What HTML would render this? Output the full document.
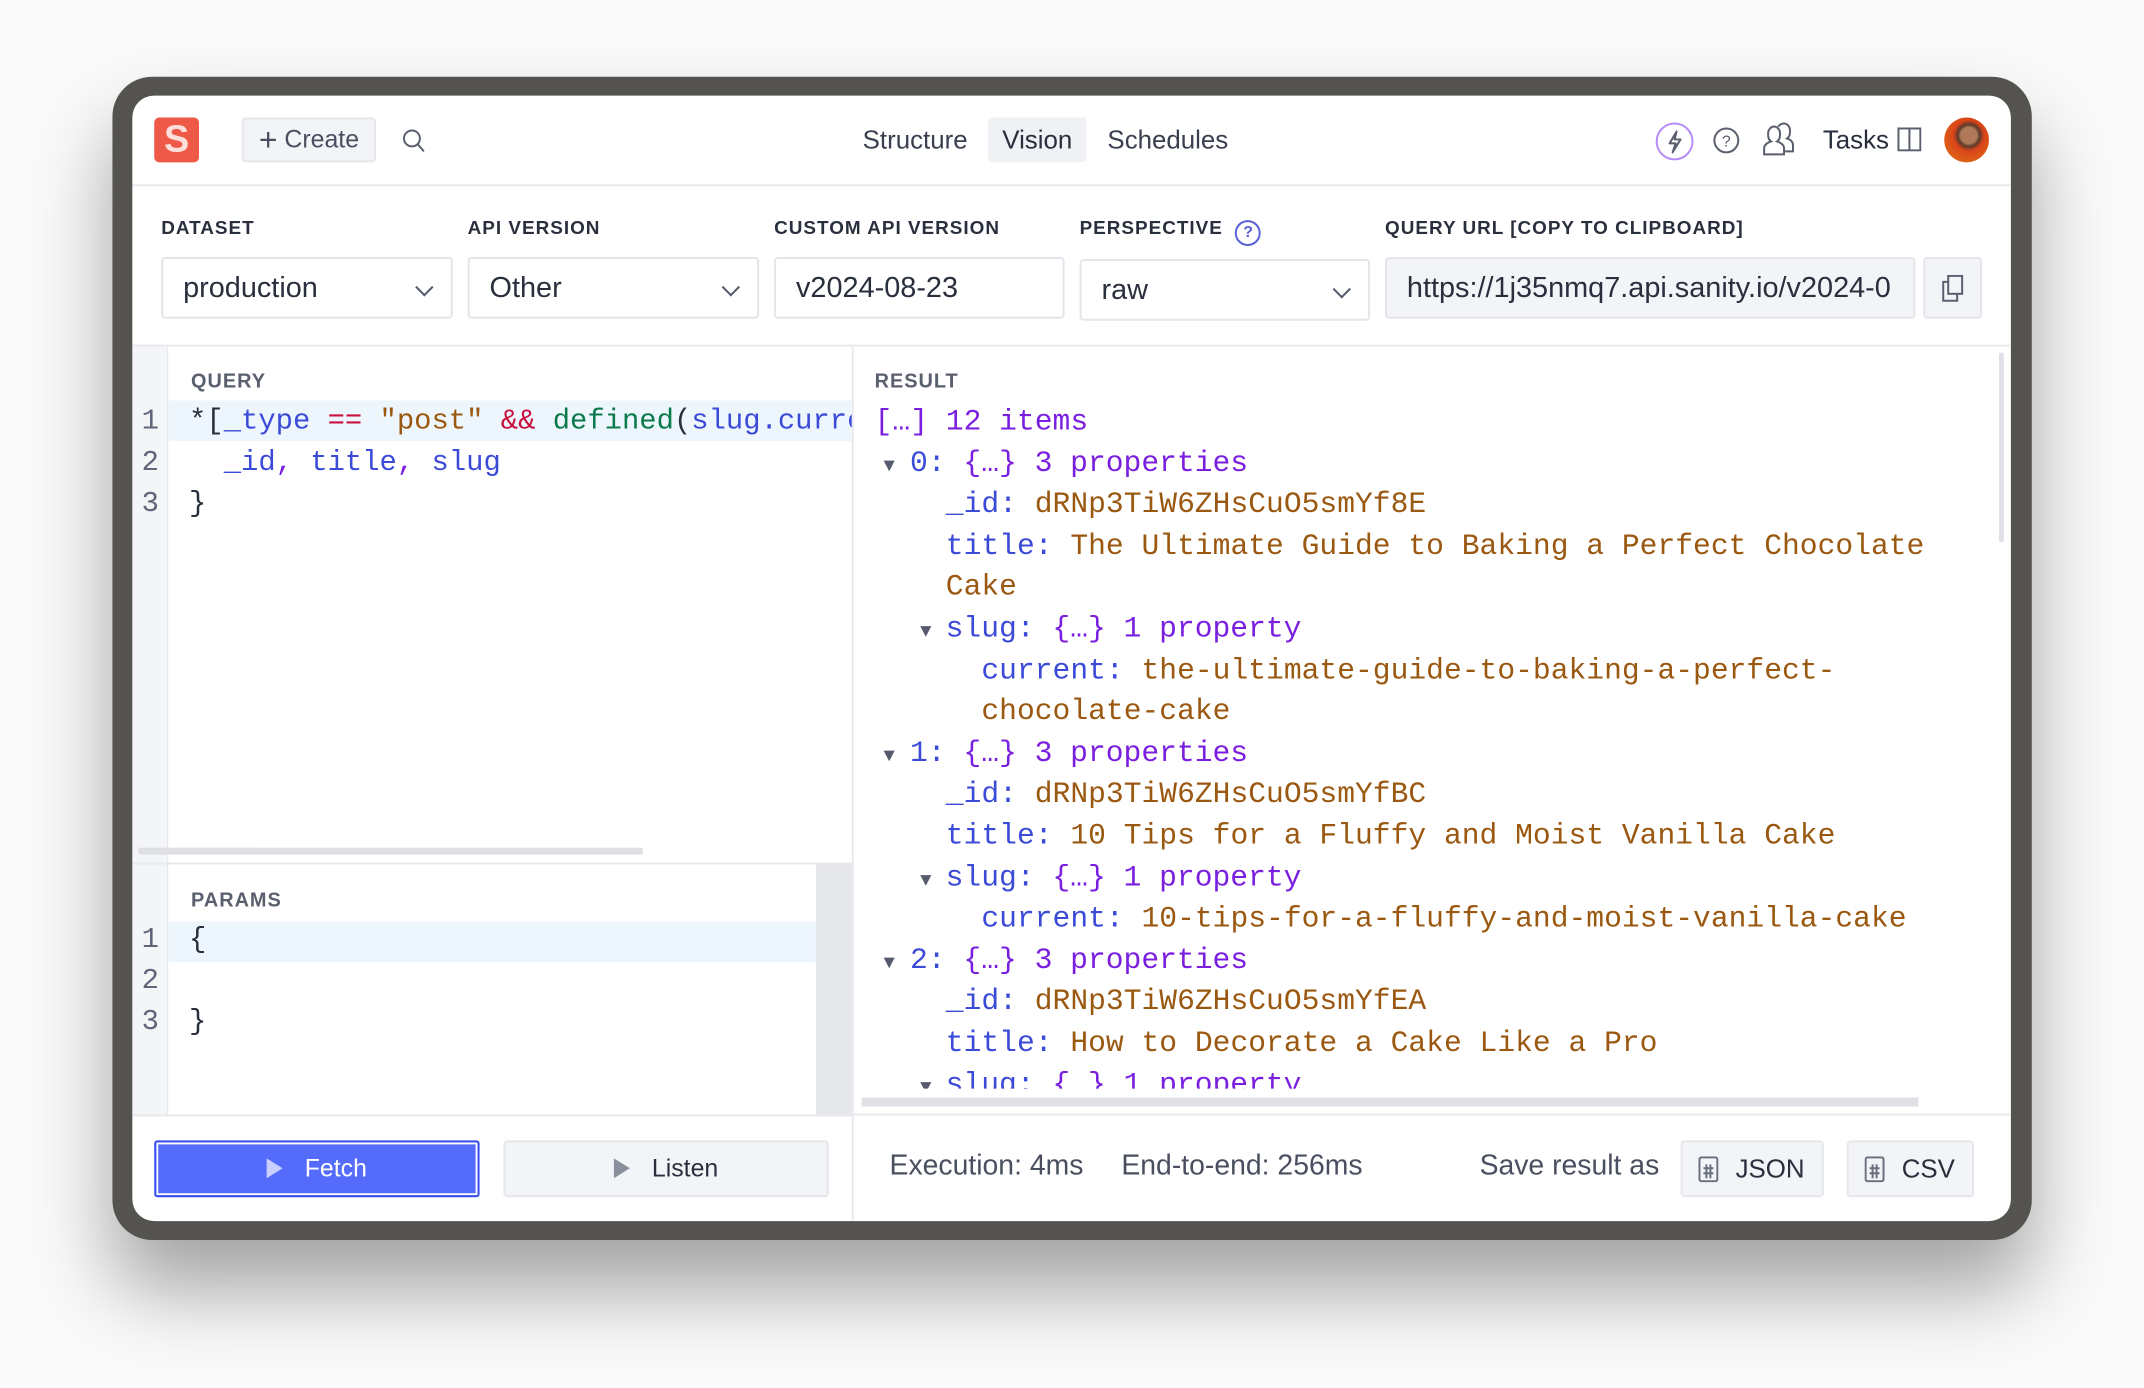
<!DOCTYPE html>
<html><head><meta charset="utf-8"><style>
*{box-sizing:border-box;margin:0;padding:0}
body{width:2144px;height:1388px;background:#fafafa;position:relative;overflow:hidden;font-family:"Liberation Sans",sans-serif;color:#2a2f3d}
#wrap{position:absolute;left:0;top:0;width:2144px;height:1388px;transform:scale(0.995,0.996);transform-origin:0 0}
.frame{position:absolute;left:113px;top:77px;width:1929px;height:1168px;background:#55534f;border-radius:40px;box-shadow:0 50px 80px rgba(0,0,0,.35)}
.win{position:absolute;left:133px;top:96px;width:1888px;height:1130px;background:#fff;border-radius:22px;overflow:hidden}
.a{position:absolute}
.lbl{position:absolute;font-size:19px;font-weight:bold;letter-spacing:1px;color:#2a2f3d}
.inp{position:absolute;height:62px;border:2px solid #e4e5ea;border-radius:4px;font-size:29px;padding-left:20px;line-height:58px;background:#fff}
.chev{position:absolute;right:20px;top:22px;width:13px;height:13px;border-right:2px solid #555b6c;border-bottom:2px solid #555b6c;transform:rotate(45deg)}
.mono{font-family:"Liberation Mono",monospace;font-size:29px;white-space:pre;position:absolute;line-height:41.6px}
.k{color:#3b4bd8}.p{color:#7a1fe0}.v{color:#9a5810}.t{color:#5a5f6e;font-size:20px}
.tr{display:inline-block;width:35.6px;line-height:0;font-size:19px;color:#555b6c;text-align:left;vertical-align:baseline}
.ln{position:absolute;left:0;width:36px;text-align:center;font-family:"Liberation Mono",monospace;font-size:29px;color:#60657a}
.btn{position:absolute;border:2px solid #e6e7ec;background:#f3f4f7;border-radius:4px;font-size:25px;color:#2a2f3d;text-align:center}
.nav{position:absolute;font-size:26px;color:#3a3f4f}
</style></head><body><div id="wrap">
<div class="frame"></div>
<div class="win">
 <div class="a" style="left:22px;top:22px;width:45px;height:45px;background:#ef5947;border-radius:5px;color:#fde0da;font-size:38px;font-weight:bold;text-align:center;line-height:45px">S</div>
 <div class="btn" style="left:110px;top:22px;width:135px;height:45px;line-height:41px;font-size:25px;color:#4a4f60"><span style="font-size:32px;vertical-align:-3px">+</span> Create</div>
 <svg class="a" style="left:270px;top:32px" width="28" height="28" viewBox="0 0 28 28" fill="none" stroke="#5a5f6e" stroke-width="2"><circle cx="11" cy="11" r="8"/><path d="M17 17l6 7"/></svg>
 <div class="nav" style="left:734px;top:29px">Structure</div>
 <div class="a" style="left:860px;top:22px;width:99px;height:45px;background:#f0f1f4;border-radius:4px;font-size:26px;line-height:45px;text-align:center">Vision</div>
 <div class="nav" style="left:980px;top:29px">Schedules</div>
 <svg class="a" style="left:1530px;top:26px" width="40" height="40" viewBox="0 0 40 40" fill="none"><circle cx="20" cy="20" r="18" stroke="#b58cf8" stroke-width="2"/><path d="M22 10l-7 12h6l-3 9 8-13h-6z" stroke="#5a5f6e" stroke-width="2" stroke-linejoin="round"/></svg>
 <svg class="a" style="left:1587px;top:30px" width="30" height="30" viewBox="0 0 30 30" fill="none" stroke="#5a5f6e" stroke-width="2"><circle cx="15" cy="15" r="12"/><text x="15" y="21" font-size="16" text-anchor="middle" fill="#5a5f6e" stroke="none" font-family="Liberation Sans">?</text></svg>
 <svg class="a" style="left:1637px;top:26px" width="34" height="36" viewBox="0 0 34 36" fill="none" stroke="#5a5f6e" stroke-width="2"><path d="M3 33v-6c0-4 4-6 7-7-3-2-3-5-3-8 0-4 3-7 6-7s6 3 6 7c0 3 0 6-3 8 3 1 7 3 7 7v6z"/><path d="M17 5c2-2 4-3 6-3 3 0 6 3 6 7 0 3 0 6-3 8 3 1 6 3 6 7v6h-8"/></svg>
 <div class="a" style="left:1699px;top:29px;font-size:26px;color:#2a2f3d">Tasks</div>
 <svg class="a" style="left:1774px;top:32px" width="24" height="24" viewBox="0 0 24 24" fill="none" stroke="#5a5f6e" stroke-width="2"><rect x="1" y="1" width="22" height="22"/><path d="M12 1v22"/></svg>
 <div class="a" style="left:1821px;top:22px;width:45px;height:45px;border-radius:50%;background:radial-gradient(circle at 55% 40%,#b07a5a 0 22%,#5a3a2a 30%,#d9441a 42%,#e07a10 100%)"></div>
 <div class="a" style="left:0;top:89px;width:1888px;height:2px;background:#e8e9ed"></div>
 <div class="lbl" style="left:29px;top:123px">DATASET</div>
 <div class="lbl" style="left:337px;top:123px">API VERSION</div>
 <div class="lbl" style="left:645px;top:123px">CUSTOM API VERSION</div>
 <div class="lbl" style="left:952px;top:123px">PERSPECTIVE <span style="display:inline-block;width:26px;height:26px;border:2px solid #5a5fd6;border-radius:50%;color:#5a5fd6;font-size:16px;text-align:center;line-height:22px;margin-left:6px;vertical-align:-3px;letter-spacing:0">?</span></div>
 <div class="lbl" style="left:1259px;top:123px">QUERY URL [COPY TO CLIPBOARD]</div>
 <div class="inp" style="left:29px;top:162px;width:293px">production<div class="chev"></div></div>
 <div class="inp" style="left:337px;top:162px;width:293px">Other<div class="chev"></div></div>
 <div class="inp" style="left:645px;top:162px;width:292px">v2024-08-23</div>
 <div class="inp" style="left:952px;top:164px;width:292px">raw<div class="chev"></div></div>
 <div class="inp" style="left:1259px;top:162px;width:533px;background:#f3f4f7;overflow:hidden;white-space:nowrap">https://1j35nmq7.api.sanity.io/v2024-0</div>
 <div class="inp" style="left:1800px;top:162px;width:59px;background:#f3f4f7;padding:0"><svg style="position:absolute;left:16px;top:16px" width="24" height="28" viewBox="0 0 24 28" fill="none" stroke="#5a5f6e" stroke-width="2"><rect x="7" y="1" width="14" height="18"/><path d="M7 7H2v19h14v-7"/></svg></div>
 <div class="a" style="left:0;top:250px;width:1888px;height:2px;background:#e8e9ed"></div>
 <div class="a" style="left:0;top:252px;width:36px;height:519px;background:#f4f5f7;border-right:1px solid #e4e5ea"></div>
 <div class="a" style="left:723px;top:252px;width:2px;height:878px;background:#e8e9ed"></div>
 <div class="t a" style="left:59px;top:276px;font-weight:bold;letter-spacing:1px">QUERY</div>
 <div class="a" style="left:36px;top:306px;width:687px;height:41px;background:#eef6fd"></div>
 <div class="ln" style="top:306px;line-height:41.6px">1<br>2<br>3</div>
 <div class="mono" style="left:57px;top:306px;width:666px;overflow:hidden">*[<span class="k">_type</span> <span style="color:#c8103e">==</span> <span class="v">"post"</span> <span style="color:#c8103e">&amp;&amp;</span> <span style="color:#0a7a4a">defined</span>(<span class="k">slug.current</span>)]{
  <span class="k">_id</span><span class="p">,</span> <span class="k">title</span><span class="p">,</span> <span class="k">slug</span>
}</div>
 <div class="a" style="left:6px;top:755px;width:507px;height:7px;background:#dfe0e5;border-radius:2px"></div>
 <div class="a" style="left:0;top:770px;width:723px;height:2px;background:#e8e9ed"></div>
 <div class="a" style="left:0;top:772px;width:36px;height:252px;background:#f4f5f7;border-right:1px solid #e4e5ea"></div>
 <div class="a" style="left:687px;top:772px;width:36px;height:252px;background:#e6e7eb"></div>
 <div class="t a" style="left:59px;top:797px;font-weight:bold;letter-spacing:1px">PARAMS</div>
 <div class="a" style="left:36px;top:829px;width:651px;height:41px;background:#eef6fd"></div>
 <div class="ln" style="top:827px;line-height:41px">1<br>2<br>3</div>
 <div class="mono" style="left:57px;top:827px;line-height:41px">{

}</div>
 <div class="a" style="left:0;top:1023px;width:723px;height:2px;background:#e8e9ed"></div>
 <div class="a" style="left:22px;top:1049px;width:327px;height:57px;background:#556bfc;border:2px solid #3a4ef0;box-shadow:inset 0 0 0 2px #fff;border-radius:3px;color:#fff;font-size:25px;text-align:center;line-height:53px"><span style="display:inline-block;width:0;height:0;border-left:16px solid #c9d0ff;border-top:10px solid transparent;border-bottom:10px solid transparent;margin-right:22px;vertical-align:-2px"></span>Fetch</div>
 <div class="btn" style="left:373px;top:1049px;width:327px;height:57px;line-height:53px"><span style="display:inline-block;width:0;height:0;border-left:16px solid #8a8f9e;border-top:10px solid transparent;border-bottom:10px solid transparent;margin-right:22px;vertical-align:-2px"></span>Listen</div>
 <div class="t a" style="left:746px;top:276px;font-weight:bold;letter-spacing:1px">RESULT</div>
 <div class="a" style="left:733px;top:307px;width:1140px;height:690px;overflow:hidden"><div class="mono" style="left:13px;top:0;font-size:29.8px"><span class="p">[…] 12 items</span>
<span class="tr" style="padding-left:9px">▼</span><span class="k">0:</span> <span class="p">{…} 3 properties</span>
    <span class="k">_id:</span> <span class="v">dRNp3TiW6ZHsCuO5smYf8E</span>
    <span class="k">title:</span> <span class="v">The Ultimate Guide to Baking a Perfect Chocolate</span>
    <span class="v">Cake</span>
  <span class="tr" style="padding-left:10px">▼</span><span class="k">slug:</span> <span class="p">{…} 1 property</span>
      <span class="k">current:</span> <span class="v">the-ultimate-guide-to-baking-a-perfect-</span>
      <span class="v">chocolate-cake</span>
<span class="tr" style="padding-left:9px">▼</span><span class="k">1:</span> <span class="p">{…} 3 properties</span>
    <span class="k">_id:</span> <span class="v">dRNp3TiW6ZHsCuO5smYfBC</span>
    <span class="k">title:</span> <span class="v">10 Tips for a Fluffy and Moist Vanilla Cake</span>
  <span class="tr" style="padding-left:10px">▼</span><span class="k">slug:</span> <span class="p">{…} 1 property</span>
      <span class="k">current:</span> <span class="v">10-tips-for-a-fluffy-and-moist-vanilla-cake</span>
<span class="tr" style="padding-left:9px">▼</span><span class="k">2:</span> <span class="p">{…} 3 properties</span>
    <span class="k">_id:</span> <span class="v">dRNp3TiW6ZHsCuO5smYfEA</span>
    <span class="k">title:</span> <span class="v">How to Decorate a Cake Like a Pro</span>
  <span class="tr" style="padding-left:10px">▼</span><span class="k">slug:</span> <span class="p">{…} 1 property</span></div></div>
 <div class="a" style="left:733px;top:1006px;width:1062px;height:9px;background:#e0e1e6"></div>
 <div class="a" style="left:1876px;top:258px;width:5px;height:190px;background:#e0e1e6;border-radius:2px"></div>
 <div class="a" style="left:725px;top:1022px;width:1163px;height:2px;background:#e8e9ed"></div>
 <div class="a" style="left:761px;top:1058px;font-size:28.5px;color:#4a4f60">Execution: 4ms</div>
 <div class="a" style="left:994px;top:1058px;font-size:28.5px;color:#4a4f60">End-to-end: 256ms</div>
 <div class="a" style="left:1354px;top:1058px;font-size:28.5px;color:#4a4f60">Save result as</div>
 <div class="btn" style="left:1556px;top:1049px;width:144px;height:57px;line-height:53px;padding-left:36px;font-size:26px">JSON<svg style="position:absolute;left:16px;top:14px" width="20" height="26" viewBox="0 0 20 26" fill="none" stroke="#6a6f7e" stroke-width="2"><rect x="1" y="1" width="18" height="24" rx="2"/><path d="M5 12h10M5 17h10M8 8v14M12 8v14"/></svg></div>
 <div class="btn" style="left:1723px;top:1049px;width:128px;height:57px;line-height:53px;padding-left:36px;font-size:26px">CSV<svg style="position:absolute;left:16px;top:14px" width="20" height="26" viewBox="0 0 20 26" fill="none" stroke="#6a6f7e" stroke-width="2"><rect x="1" y="1" width="18" height="24" rx="2"/><path d="M5 12h10M5 17h10M8 8v14M12 8v14"/></svg></div>
</div>
</div></body></html>
